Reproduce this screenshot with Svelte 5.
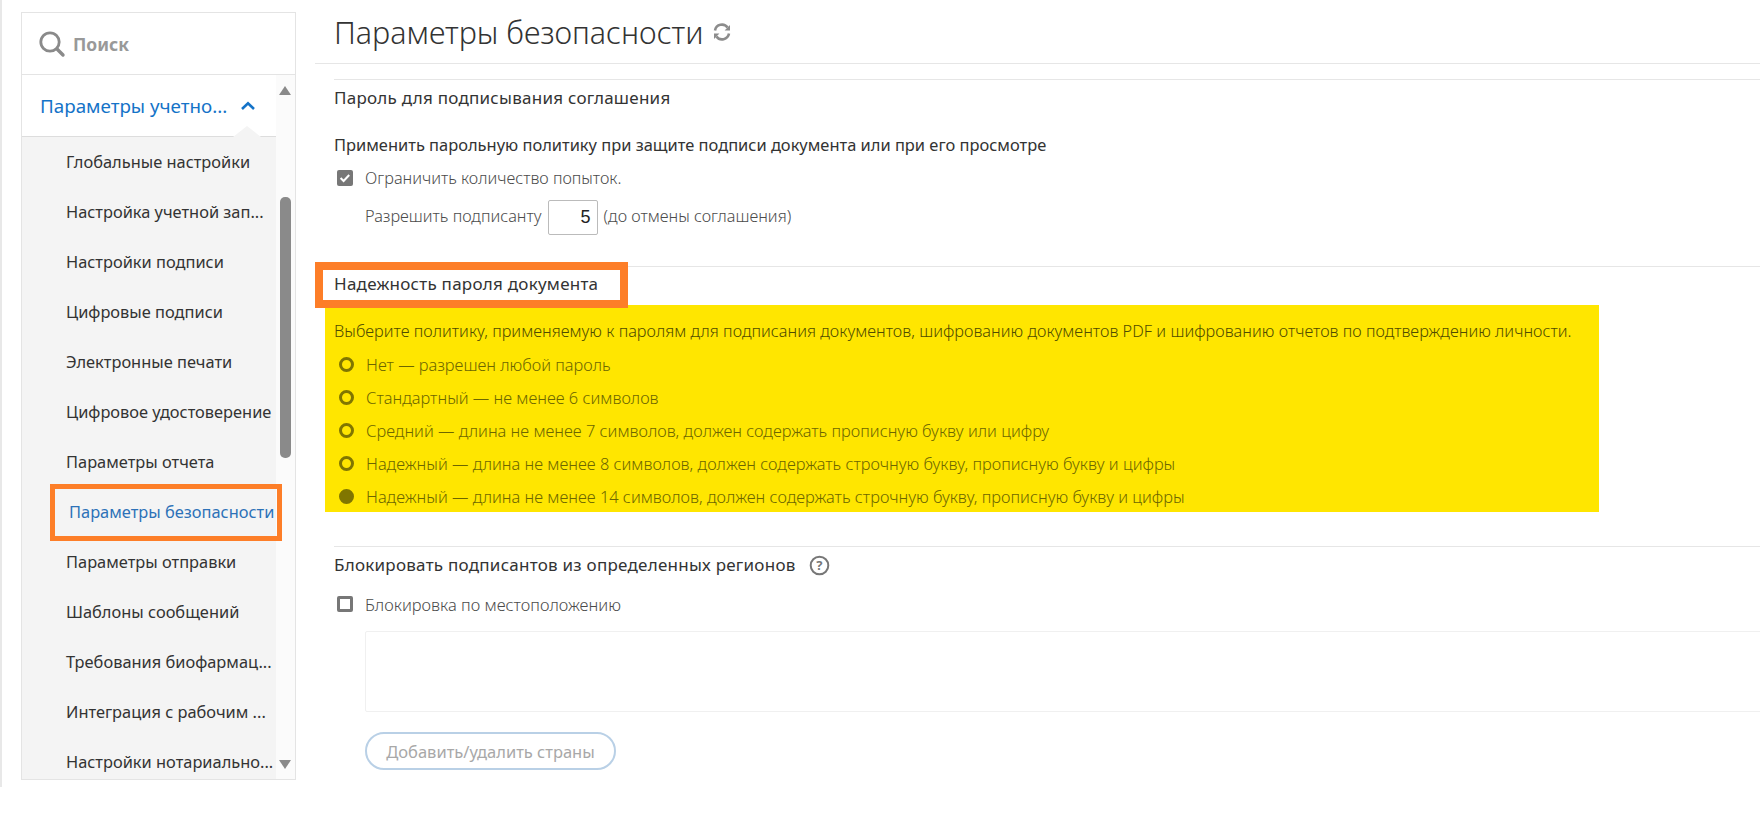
<script>
  const navItems = [
    { label: 'Глобальные настройки' },
    { label: 'Настройка учетной зап...' },
    { label: 'Настройки подписи' },
    { label: 'Цифровые подписи' },
    { label: 'Электронные печати' },
    { label: 'Цифровое удостоверение' },
    { label: 'Параметры отчета' },
    { label: 'Параметры безопасности', active: true },
    { label: 'Параметры отправки' },
    { label: 'Шаблоны сообщений' },
    { label: 'Требования биофармац...' },
    { label: 'Интеграция с рабочим ...' },
    { label: 'Настройки нотариально...' }
  ];

  const policies = [
    { label: 'Нет — разрешен любой пароль' },
    { label: 'Стандартный — не менее 6 символов' },
    { label: 'Средний — длина не менее 7 символов, должен содержать прописную букву или цифру' },
    { label: 'Надежный — длина не менее 8 символов, должен содержать строчную букву, прописную букву и цифры' },
    { label: 'Надежный — длина не менее 14 символов, должен содержать строчную букву, прописную букву и цифры', checked: true }
  ];
</script>

<div class="page">
  <aside class="sidebar">
    <div class="search">
      <svg width="28" height="28" viewBox="0 0 28 28" fill="none" stroke="#8a8a8a">
        <circle cx="12" cy="12" r="9.2" stroke-width="2.8" />
        <path d="M19 19l6 6" stroke-width="3.4" stroke-linecap="round" />
      </svg>
      <span>Поиск</span>
    </div>
    <div class="nav-wrap">
      <nav class="nav">
        <div class="nav-head">
          <span>Параметры учетно...</span>
          <svg width="16" height="10" viewBox="0 0 16 10" fill="none" stroke="#1473c8" stroke-width="2.6">
            <path d="M2 8l6-5.6L14 8" />
          </svg>
        </div>
        <ul>
          {#each navItems as item}
            <li class:active={item.active}>{item.label}</li>
          {/each}
        </ul>
      </nav>
      <div class="scroll">
        <i class="arrow up"></i>
        <i class="thumb"></i>
        <i class="arrow down"></i>
      </div>
    </div>
  </aside>

  <main class="main">
    <header class="title">
      <h1>Параметры безопасности</h1>
      <svg width="20" height="18" viewBox="0 0 20 18" fill="none" stroke="#8c8c8c" stroke-width="2.6">
        <path d="M3 7.4A7 7 0 0 1 15.6 4.6" />
        <path d="M17 10.6A7 7 0 0 1 4.4 13.4" />
        <path d="M18 2v5.4h-5.4z" fill="#8c8c8c" stroke="none" />
        <path d="M2 16v-5.4h5.4z" fill="#8c8c8c" stroke="none" />
      </svg>
    </header>

    <section class="sec first">
      <h2>Пароль для подписывания соглашения</h2>
      <p class="strong">Применить парольную политику при защите подписи документа или при его просмотре</p>
      <div class="row check-row">
        <svg class="box" width="16" height="16" viewBox="0 0 16 16">
          <rect width="16" height="16" rx="2" fill="#777" />
          <path d="M3.6 8l3 3 5.6-6" fill="none" stroke="#fff" stroke-width="2" />
        </svg>
        Ограничить количество попыток.
      </div>
      <div class="row attempts">
        Разрешить подписанту
        <span class="num">5</span>
        (до отмены соглашения)
      </div>
    </section>

    <section class="sec strength">
      <h2 class="marked">Надежность пароля документа</h2>
      <div class="yellow">
        <p>Выберите политику, применяемую к паролям для подписания документов, шифрованию документов PDF и шифрованию отчетов по подтверждению личности.</p>
        {#each policies as p}
          <div class="row radio-row">
            <i class="radio" class:on={p.checked}></i>
            {p.label}
          </div>
        {/each}
      </div>
    </section>

    <section class="sec blockers">
      <h2>
        Блокировать подписантов из определенных регионов
        <svg width="21" height="21" viewBox="0 0 21 21">
          <circle cx="10.5" cy="10.5" r="8.8" fill="none" stroke="#777" stroke-width="2" />
          <text x="10.5" y="15" text-anchor="middle">?</text>
        </svg>
      </h2>
      <div class="row check-row">
        <i class="box empty"></i>
        Блокировка по местоположению
      </div>
      <div class="countries"></div>
      <button>Добавить/удалить страны</button>
    </section>
  </main>
</div>

<style>
  :global(body) {
    margin: 0;
    background: #fff;
  }

  .page {
    position: relative;
    display: flex;
    height: 837px;
    overflow: hidden;
    font-family: 'Noto Sans', 'Open Sans', sans-serif;
    color: #4b4b4b;
    font-size: 16.3px;
    font-weight: 300;
  }

  .page::before {
    content: '';
    position: absolute;
    left: 0;
    top: 0;
    width: 2px;
    height: 787px;
    background: #e8e8e8;
  }

  .sidebar {
    box-sizing: border-box;
    flex: none;
    width: 275px;
    height: 768px;
    margin: 12px 0 0 21px;
    border: 1px solid #e4e4e4;
    display: flex;
    flex-direction: column;
  }

  .search {
    flex: none;
    height: 62px;
    box-sizing: border-box;
    border-bottom: 1px solid #e4e4e4;
    display: flex;
    align-items: center;
    gap: 7px;
    padding-left: 16px;
    color: #999;
    font-size: 17.5px;
    font-weight: 700;
  }

  .nav-wrap {
    flex: 1;
    display: flex;
    min-height: 0;
  }

  .nav {
    width: 254px;
    flex: none;
    background: #f4f4f4;
  }

  .nav-head {
    height: 62px;
    box-sizing: border-box;
    background: #fff;
    border-bottom: 1px solid #ddd;
    display: flex;
    align-items: center;
    gap: 13px;
    padding-left: 18px;
    color: #1473c8;
    font-size: 18.8px;
    font-weight: 400;
    position: relative;
  }

  .nav-head::after {
    content: '';
    position: absolute;
    left: 211px;
    bottom: -1px;
    border: 14px solid transparent;
    border-width: 0 14px 11px;
    border-bottom-color: #f4f4f4;
  }

  ul {
    list-style: none;
    margin: 0;
    padding: 0;
  }

  li {
    box-sizing: border-box;
    height: 50px;
    display: flex;
    align-items: center;
    padding: 0 0 2px 44px;
    color: #333;
    font-size: 16.4px;
    font-weight: 400;
    white-space: nowrap;
  }

  li.active {
    color: #2d72b8;
    position: relative;
    z-index: 1;
    padding-left: 47px;
  }

  li.active::after {
    content: '';
    position: absolute;
    left: 28px;
    top: -3px;
    width: 222px;
    height: 47px;
    border: 5px solid #fd7e28;
  }

  .scroll {
    flex: 1;
    position: relative;
    background: #fbfbfb;
  }

  .thumb {
    position: absolute;
    left: 4px;
    top: 122px;
    width: 11px;
    height: 261px;
    border-radius: 5px;
    background: #8a8a8a;
  }

  .arrow {
    position: absolute;
    left: 3px;
    border: 6.5px solid transparent;
  }

  .arrow.up {
    top: 11px;
    border-top: 0;
    border-bottom: 9px solid #8a8a8a;
  }

  .arrow.down {
    bottom: 10px;
    border-bottom: 0;
    border-top: 9px solid #8a8a8a;
  }

  .main {
    flex: 1;
    min-width: 0;
    margin-left: 19px;
  }

  .title {
    height: 64px;
    box-sizing: border-box;
    border-bottom: 1px solid #e6e6e6;
    display: flex;
    align-items: center;
    gap: 8px;
    padding-left: 19px;
  }

  h1 {
    margin: 0;
    font-weight: 300;
    font-size: 30.5px;
    color: #333;
  }

  .sec {
    margin-left: 19px;
    border-top: 1px solid #e6e6e6;
  }

  .first {
    margin-top: 15px;
    height: 187px;
    padding-top: 7px;
    box-sizing: border-box;
  }

  h2 {
    margin: 0;
    font-size: 17px;
    font-weight: 400;
    letter-spacing: 0.25px;
    color: #333;
    line-height: 22px;
  }

  .strong {
    margin: 25px 0 0;
    font-size: 16.45px;
    font-weight: 400;
    color: #333;
    line-height: 22px;
  }

  .row {
    display: flex;
    align-items: center;
    white-space: nowrap;
  }

  .check-row {
    margin-top: 11px;
    height: 22px;
  }

  .box {
    width: 16px;
    height: 16px;
    margin: 0 12px 0 3px;
    flex: none;
    box-sizing: border-box;
  }

  .box.empty {
    border: 3px solid #777;
    border-radius: 2px;
  }

  .attempts {
    margin: 7px 0 0 31px;
    gap: 6px;
  }

  .num {
    box-sizing: border-box;
    width: 50px;
    height: 35px;
    margin-top: 4px;
    border: 1px solid #bbb;
    border-radius: 2px;
    display: flex;
    align-items: center;
    justify-content: flex-end;
    padding-right: 6px;
    font-family: 'Liberation Sans', sans-serif;
    font-size: 18px;
    font-weight: 400;
    color: #222;
  }

  .strength {
    height: 280px;
    padding-top: 6px;
    box-sizing: border-box;
  }

  .marked {
    position: relative;
  }

  .marked::after {
    content: '';
    position: absolute;
    left: -19px;
    top: -11px;
    width: 297px;
    height: 30px;
    border: 8px solid #fd7e28;
  }

  .yellow {
    margin: 10px 0 0 -9px;
    width: 1274px;
    height: 207px;
    padding: 15px 0 0 9px;
    box-sizing: border-box;
    background: #ffe600;
    color: #6d6600;
    font-size: 16.4px;
  }

  .yellow p {
    margin: 0 0 6px;
    font-size: 16.3px;
    line-height: 22px;
    letter-spacing: 0.03px;
    color: #4f4b00;
  }

  .radio-row {
    height: 33px;
  }

  .radio {
    width: 15px;
    height: 15px;
    box-sizing: border-box;
    border: 3px solid #807600;
    border-radius: 50%;
    margin: 0 12px 0 5px;
    flex: none;
  }

  .radio.on {
    background: #807600;
  }

  .blockers {
    padding-top: 7px;
  }

  .blockers h2 {
    display: flex;
    align-items: center;
    gap: 13px;
  }

  .blockers text {
    font-size: 13px;
    font-weight: 700;
    fill: #777;
  }

  .blockers .check-row {
    margin-top: 17px;
    font-size: 16.5px;
  }

  .countries {
    margin: 16px -10px 0 31px;
    height: 81px;
    box-sizing: border-box;
    border: 1px solid #f0f0f0;
    border-radius: 2px;
  }

  button {
    margin: 20px 0 0 31px;
    width: 251px;
    height: 38px;
    border: 2px solid #b9d0e6;
    border-radius: 20px;
    background: #fff;
    color: #a8a8a8;
    font: 400 16.5px 'Noto Sans', sans-serif;
  }
</style>
